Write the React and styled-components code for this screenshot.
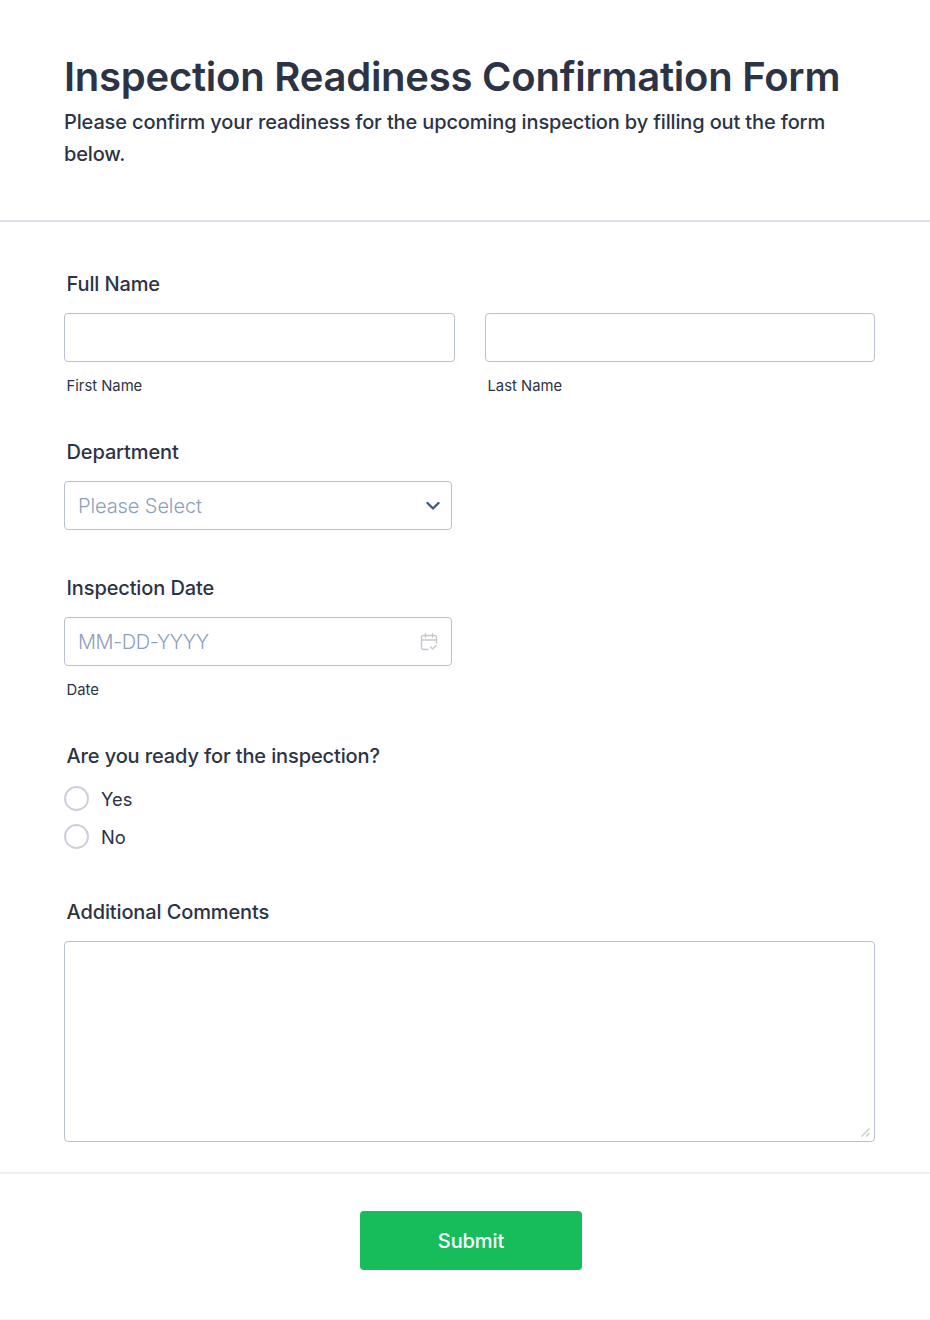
import React from 'react';
import styled, { createGlobalStyle } from 'styled-components';

const GlobalStyle = createGlobalStyle`
  * { box-sizing: border-box; }
  body {
    margin: 0;
    background: #fff;
    color: #2c3345;
    font-family: Inter, "Liberation Sans", sans-serif;
  }
`

const Page = styled.div`
  width: 930px;
  height: 1320px;
  display: flex;
  flex-direction: column;
  background: #fff;
  border-bottom: 1px solid #f3f3f7;
`

const Header = styled.header`
  height: 222px;
  padding: 53px 64px 0;
  border-bottom: 2px solid #e0e0e9;
`

const Title = styled.h1`
  margin: 0;
  font-size: 40px;
  line-height: 48px;
  font-weight: 600;
  letter-spacing: -0.24px;
  color: #2c3345;
`

const Subtitle = styled.p`
  margin: 5px 0 0;
  font-size: 20px;
  line-height: 32px;
  font-weight: 500;
  letter-spacing: -0.14px;
  color: #2c3345;
`

const Form = styled.form`
  display: flex;
  flex-direction: column;
  flex: 1;
`

const Body = styled.div`
  padding: 49px 55px 30px 64px;
  display: flex;
  flex-direction: column;
  border-bottom: 2px solid #eeeff4;
`

const Field = styled.div`
  margin-bottom: ${p => p.$gap}px;
`

const Label = styled.div`
  padding-left: 2.5px;
  font-size: 20px;
  line-height: 26px;
  font-weight: 500;
  letter-spacing: -0.12px;
  color: #2c3345;
  margin-bottom: 16px;
`

const NameRow = styled.div`
  display: grid;
  grid-template-columns: 391px 390px;
  column-gap: 30px;
`

const Input = styled.input`
  display: block;
  width: 100%;
  height: 49px;
  padding: 0 13px;
  border: 1px solid #b8bfd0;
  border-radius: 4px;
  background: #fff;
  font: 300 20px Inter, "Liberation Sans", sans-serif;
  letter-spacing: -0.4px;
  color: #2c3345;
  outline: none;
  &::placeholder { color: #8ca0bd; opacity: 1; }
`

const SubLabel = styled.div`
  margin-top: 14px;
  padding-left: 2.5px;
  font-size: 14.8px;
  line-height: 20px;
  color: #2c3345;
`

const ShortBox = styled.div`
  position: relative;
  width: 388px;
`

const SelectInput = styled.select`
  display: block;
  width: 100%;
  height: 49px;
  padding: 0 13px;
  border: 1px solid #b8bfd0;
  border-radius: 4px;
  background: #fff;
  appearance: none;
  font: 300 20px Inter, "Liberation Sans", sans-serif;
  letter-spacing: -0.1px;
  color: #8ca0bd;
  outline: none;
`

const BoxIcon = styled.svg`
  position: absolute;
  right: ${p => p.$right}px;
  top: 50%;
  transform: translateY(-50%);
  pointer-events: none;
`

const RadioList = styled.div`
  display: flex;
  flex-direction: column;
  gap: 13px;
  padding-top: 1px;
`

const RadioRow = styled.label`
  display: flex;
  align-items: center;
  gap: 12px;
  height: 25px;
  font-size: 18.3px;
  color: #2c3345;
`

const RadioCircle = styled.input`
  appearance: none;
  width: 25px;
  height: 25px;
  margin: 0;
  border: 2px solid #ccd0dc;
  border-radius: 50%;
  background: #fff;
`

const CommentsBox = styled.div`
  position: relative;
  width: 811px;
`

const Comments = styled.textarea`
  display: block;
  width: 100%;
  height: 201px;
  padding: 10px 13px;
  border: 1px solid #b8bfd0;
  border-radius: 4px;
  background: #fff;
  outline: none;
  resize: none;
  font: 400 18px Inter, "Liberation Sans", sans-serif;
`

const ResizeGrip = styled.svg`
  position: absolute;
  right: 5px;
  bottom: 5px;
  pointer-events: none;
`

const Footer = styled.div`
  flex: 1;
  display: flex;
  justify-content: center;
  padding: 37px 0 0 12px;
`

const SubmitButton = styled.button`
  width: 222px;
  height: 59px;
  border: 0;
  border-radius: 4px;
  background: #18bd5b;
  color: #fff;
  font: 500 20px Inter, "Liberation Sans", sans-serif;
  letter-spacing: -0.1px;
  cursor: pointer;
`

const App = () => {
  return (
    <Page>
      <GlobalStyle />
      <Header>
        <Title>Inspection Readiness Confirmation Form</Title>
        <Subtitle>Please confirm your readiness for the upcoming inspection by filling out the form below.</Subtitle>
      </Header>
      <Form onSubmit={e => e.preventDefault()}>
        <Body>
          <Field $gap={43}>
            <Label>Full Name</Label>
            <NameRow>
              <div>
                <Input type="text" />
                <SubLabel>First Name</SubLabel>
              </div>
              <div>
                <Input type="text" />
                <SubLabel>Last Name</SubLabel>
              </div>
            </NameRow>
          </Field>
          <Field $gap={45}>
            <Label>Department</Label>
            <ShortBox>
              <SelectInput defaultValue="">
                <option value="">Please Select</option>
              </SelectInput>
              <BoxIcon $right={12} width="14" height="9" viewBox="0 0 14 9" fill="none">
                <path d="M1.5 1.5L7 7L12.5 1.5" stroke="#45597a" strokeWidth="2.4" strokeLinecap="round" strokeLinejoin="round" />
              </BoxIcon>
            </ShortBox>
          </Field>
          <Field $gap={43}>
            <Label>Inspection Date</Label>
            <ShortBox>
              <Input type="text" placeholder="MM-DD-YYYY" />
              <BoxIcon $right={14} width="18" height="18" viewBox="0 0 18 18" fill="none">
                <path d="M8 16.5H3.5a2 2 0 0 1-2-2V4.5a2 2 0 0 1 2-2h11a2 2 0 0 1 2 2V10M1.5 7h15M5.5 .8v3.4M12.5 .8v3.4" stroke="#c3c8d4" strokeWidth="1.4" strokeLinecap="round" />
                <path d="M10.5 14l2 2 3.5-3.5" stroke="#c3c8d4" strokeWidth="1.4" strokeLinecap="round" strokeLinejoin="round" />
              </BoxIcon>
            </ShortBox>
            <SubLabel>Date</SubLabel>
          </Field>
          <Field $gap={50}>
            <Label>Are you ready for the inspection?</Label>
            <RadioList>
              <RadioRow><RadioCircle type="radio" name="ready" />Yes</RadioRow>
              <RadioRow><RadioCircle type="radio" name="ready" />No</RadioRow>
            </RadioList>
          </Field>
          <Field $gap={0}>
            <Label>Additional Comments</Label>
            <CommentsBox>
              <Comments />
              <ResizeGrip width="9" height="9" viewBox="0 0 9 9" fill="none">
                <path d="M0.5 8.5L8.5 0.5M5 8.5L8.5 5" stroke="#c4c7d2" strokeWidth="1.2" />
              </ResizeGrip>
            </CommentsBox>
          </Field>
        </Body>
        <Footer>
          <SubmitButton type="submit">Submit</SubmitButton>
        </Footer>
      </Form>
    </Page>
  );
};

export default App;
